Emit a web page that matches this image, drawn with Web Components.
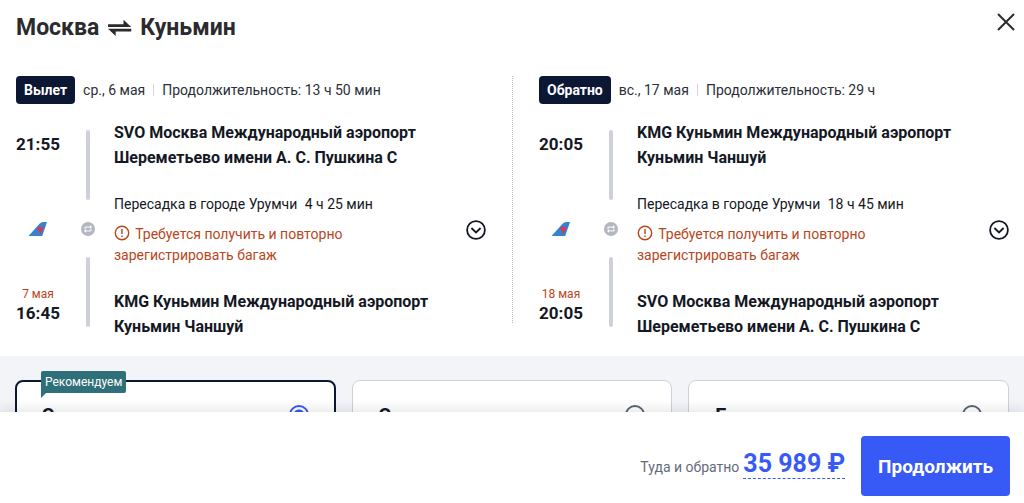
<!DOCTYPE html>
<html lang="ru">
<head>
    <meta charset="UTF-8">
    <meta name="viewport" content="width=device-width, initial-scale=1.0">
    <title>Москва ⇌ Куньмин</title>
    <style>
        body {
            margin: 0;
            font-family: Roboto, "Liberation Sans", sans-serif;
            font-size: 14px;
            line-height: 20px;
            color: #141824;
            background: #fff;
            --accent: #3759f6;
            --warning: #b8461c;
            --navy: #0b1733;
        }
    </style>
</head>
<body>
    <trip-dialog>
        <trip-header slot="header" from="Москва" to="Куньмин"></trip-header>
        <flight-leg slot="legs" label="Вылет" date="ср., 6 мая" duration="13 ч 50 мин"
            depart="21:55" arrive="16:45" arrive-date="7 мая" transfer="4 ч 25 мин">
            <span slot="from">SVO Москва Международный аэропорт Шереметьево имени А. С. Пушкина C</span>
            <span slot="to">KMG Куньмин Международный аэропорт Куньмин Чаншуй</span>
        </flight-leg>
        <flight-leg slot="legs" label="Обратно" date="вс., 17 мая" duration="29 ч"
            depart="20:05" arrive="20:05" arrive-date="18 мая" transfer="18 ч 45 мин">
            <span slot="from">KMG Куньмин Международный аэропорт Куньмин Чаншуй</span>
            <span slot="to">SVO Москва Международный аэропорт Шереметьево имени А. С. Пушкина C</span>
        </flight-leg>
        <fare-card slot="fares" hint="Рекомендуем" selected>Эконом</fare-card>
        <fare-card slot="fares">Эконом</fare-card>
        <fare-card slot="fares">Бизнес</fare-card>
        <price-bar slot="footer" label="Туда и обратно" price="35 989 ₽">Продолжить</price-bar>
    </trip-dialog>

    <script>
        class TripDialog extends HTMLElement {
            connectedCallback() {
                const shadowRoot = this.attachShadow({mode: 'open'});
                shadowRoot.innerHTML = `
                <style>
                    :host {
                        display: flex;
                        flex-direction: column;
                        height: 100vh;
                        overflow: hidden;
                    }

                    main {
                        flex: 1;
                        min-height: 0;
                        overflow: hidden;
                    }

                    .legs {
                        display: grid;
                        grid-template-columns: 1fr 1fr;
                        column-gap: 53px;
                        padding: 0 15px 17px 16px;
                    }

                    .fares {
                        display: grid;
                        grid-template-columns: repeat(3, 1fr);
                        gap: 16px;
                        padding: 24px 15px;
                        background: #f3f4f8;
                    }
                </style>
                <main>
                    <slot name="header"></slot>
                    <section class="legs"><slot name="legs"></slot></section>
                    <section class="fares"><slot name="fares"></slot></section>
                </main>
                <slot name="footer"></slot>`;
            }
        }

        class TripHeader extends HTMLElement {
            connectedCallback() {
                const shadowRoot = this.attachShadow({mode: 'open'});
                shadowRoot.innerHTML = `
                <style>
                    :host {
                        display: flex;
                        justify-content: space-between;
                        align-items: flex-start;
                        padding: 12px 8px 32px 16px;
                        color: #2b2b2e;
                    }

                    h1 {
                        display: flex;
                        align-items: center;
                        gap: 8px;
                        margin: 0;
                        font-size: 23px;
                        line-height: 32px;
                    }

                    button {
                        display: flex;
                        padding: 0;
                        border: 0;
                        background: none;
                        color: inherit;
                        cursor: pointer;
                    }
                </style>
                <h1>
                    <span>${this.getAttribute('from')}</span>
                    <svg width="25" height="18" viewBox="0 0 25 18" fill="currentColor" aria-hidden="true">
                        <path d="M1 5.2h15.5V.8L24.2 7.9H1zM24.2 9.8H1l7.7 7.1v-4.4h15.5z"/>
                    </svg>
                    <span>${this.getAttribute('to')}</span>
                </h1>
                <button type="button" aria-label="Закрыть">
                    <svg width="20" height="20" viewBox="0 0 20 20" fill="none" stroke="currentColor" stroke-width="2">
                        <path d="M2 2l16 16M18 2L2 18"/>
                    </svg>
                </button>`;
            }
        }

        class FlightLeg extends HTMLElement {
            connectedCallback() {
                const get = (name) => this.getAttribute(name);
                const shadowRoot = this.attachShadow({mode: 'open'});
                shadowRoot.innerHTML = `
                <style>
                    :host {
                        display: block;
                        position: relative;
                    }

                    /* dotted rule in the middle of the gap between legs */
                    :host(:first-of-type)::after {
                        content: "";
                        position: absolute;
                        top: 0;
                        bottom: 16px;
                        right: -27px;
                        border-right: 1px dotted #b9bcc4;
                    }

                    .summary {
                        display: flex;
                        align-items: center;
                        gap: 8px;
                        margin-bottom: 16px;
                        color: #2b2e38;
                    }

                    .label {
                        padding: 4px 8px;
                        border-radius: 4px;
                        background: var(--navy);
                        color: #fff;
                        font-weight: bold;
                    }

                    .duration {
                        display: flex;
                        align-items: center;
                        gap: 8px;
                    }

                    .duration::before {
                        content: "";
                        height: 12px;
                        border-left: 1px solid #d5d7dd;
                    }

                    .route {
                        display: flex;
                    }

                    .times, .rail, .stops {
                        display: flex;
                        flex-direction: column;
                    }

                    .times {
                        width: 44px;
                        padding: 14px 0 16px;
                        align-items: center;
                        justify-content: space-between;
                    }

                    .times div {
                        min-height: 38px;
                        text-align: center;
                        white-space: nowrap;
                    }

                    time {
                        display: block;
                        font-size: 17px;
                        font-weight: bold;
                    }

                    small {
                        display: block;
                        font-size: 12px;
                        line-height: 18px;
                        color: var(--warning);
                    }

                    .rail {
                        align-items: center;
                        justify-content: space-between;
                        padding: 10px 19px 12px 21px;
                    }

                    .rail i {
                        width: 4px;
                        height: 70px;
                        border-radius: 2px;
                        background: #cfd1da;
                    }

                    .stops {
                        flex: 1;
                        gap: 23px;
                    }

                    .airport {
                        font-size: 16px;
                        line-height: 25px;
                        font-weight: bold;
                    }

                    p {
                        margin: 0;
                    }

                    .transfer {
                        line-height: 22px;
                    }

                    .transfer span {
                        margin-left: 4px;
                    }

                    .warning {
                        margin-top: 9px;
                        max-width: 240px;
                        line-height: 21px;
                        color: var(--warning);
                    }

                    .warning svg {
                        vertical-align: -2px;
                        margin-right: 2px;
                    }

                    button {
                        align-self: center;
                        display: flex;
                        padding: 0;
                        border: 0;
                        background: none;
                        color: inherit;
                        cursor: pointer;
                    }
                </style>
                <div class="summary">
                    <span class="label">${get('label')}</span>
                    <span>${get('date')}</span>
                    <span class="duration">Продолжительность: ${get('duration')}</span>
                </div>
                <div class="route">
                    <div class="times">
                        <div><time>${get('depart')}</time></div>
                        <svg width="20" height="16" viewBox="0 0 20 16" aria-hidden="true">
                            <path d="M.5 15L11.8 2.6Q13.2 1 15.2 1H19L14.2 15z" fill="#3583cf"/>
                            <path d="M11.8 5.5l1.2 1.2 1.8-1.4 1 2.2-1.5 1-.1 1.8-1.2.5-.3 2.2-1.4-.4.1-2-1-.8.2-1.4-2.2-.4 1.6-2 1.2.5z" fill="#d8394f"/>
                        </svg>
                        <div><small>${get('arrive-date')}</small><time>${get('arrive')}</time></div>
                    </div>
                    <div class="rail">
                        <i></i>
                        <svg width="14" height="14" viewBox="0 0 14 14" aria-hidden="true">
                            <circle cx="7" cy="7" r="7" fill="#b3b7c1"/>
                            <path d="M4 7V5.1H9.6M10 7v1.9H4.4" fill="none" stroke="#fff"/>
                            <path d="M9 3.2L11 5.1 9 7zM5 7L3 8.9l2 1.9z" fill="#fff"/>
                        </svg>
                        <i></i>
                    </div>
                    <div class="stops">
                        <div class="airport"><slot name="from"></slot></div>
                        <div>
                            <p class="transfer">Пересадка в городе Урумчи <span>${get('transfer')}</span></p>
                            <p class="warning"><svg width="16" height="16" viewBox="0 0 16 16" fill="none" stroke="currentColor" stroke-width="1.4" aria-hidden="true"><circle cx="8" cy="8" r="6.7"/><path d="M8 4v5M8 10.4V12"/></svg> Требуется получить и повторно зарегистрировать багаж</p>
                        </div>
                        <div class="airport"><slot name="to"></slot></div>
                    </div>
                    <button type="button" aria-label="Подробнее">
                        <svg width="20" height="20" viewBox="0 0 20 20" fill="none" stroke="currentColor" stroke-width="1.8">
                            <circle cx="10" cy="10" r="8.9"/>
                            <path d="M5.4 8L10 12.4 14.6 8"/>
                        </svg>
                    </button>
                </div>`;
            }
        }

        class FareCard extends HTMLElement {
            connectedCallback() {
                const hint = this.getAttribute('hint');
                const shadowRoot = this.attachShadow({mode: 'open'});
                shadowRoot.innerHTML = `
                <style>
                    :host {
                        display: block;
                        position: relative;
                        box-sizing: border-box;
                        height: 240px;
                        padding: 24px 26px;
                        border: 1px solid #cfd1da;
                        border-radius: 8px;
                        background: #fff;
                    }

                    :host([selected]) {
                        padding: 23px 25px;
                        border: 2px solid var(--navy);
                    }

                    label {
                        display: flex;
                        align-items: flex-start;
                        justify-content: space-between;
                        font-size: 20px;
                        line-height: 22px;
                        font-weight: bold;
                    }

                    input {
                        appearance: none;
                        width: 20px;
                        height: 20px;
                        margin: 0;
                        border: 2px solid #5b6479;
                        border-radius: 50%;
                    }

                    input:checked {
                        border-color: var(--accent);
                        background: radial-gradient(var(--accent) 5px, #fff 6px);
                    }

                    .hint {
                        position: absolute;
                        top: -11px;
                        left: 24px;
                        padding: 1px 4px;
                        border-radius: 2px 2px 2px 0;
                        background: #2f6f7a;
                        color: #fff;
                        font-size: 12px;
                    }

                    .hint::after {
                        content: "";
                        position: absolute;
                        top: 100%;
                        left: 0;
                        border-top: 5px solid #2f6f7a;
                        border-right: 5px solid transparent;
                    }
                </style>
                ${hint ? `<span class="hint">${hint}</span>` : ''}
                <label><slot></slot><input type="radio" ${this.hasAttribute('selected') ? 'checked' : ''}></label>`;
            }
        }

        class PriceBar extends HTMLElement {
            connectedCallback() {
                const shadowRoot = this.attachShadow({mode: 'open'});
                shadowRoot.innerHTML = `
                <style>
                    :host {
                        display: flex;
                        align-items: center;
                        justify-content: flex-end;
                        position: relative;
                        padding: 24px 14px 7px;
                        background: #fff;
                        box-shadow: 0 -2px 12px rgba(20, 24, 36, 0.12);
                    }

                    .total {
                        display: flex;
                        align-items: baseline;
                        gap: 4px;
                        margin: 0 16px 4px 0;
                        color: #646b7d;
                    }

                    button {
                        border: 0;
                        font-family: inherit;
                        font-weight: bold;
                        cursor: pointer;
                    }

                    .price {
                        padding: 0;
                        border-bottom: 1px dashed var(--accent);
                        background: none;
                        color: var(--accent);
                        font-size: 25px;
                        line-height: 28px;
                    }

                    .next {
                        height: 60px;
                        padding: 0 17px;
                        border-radius: 4px;
                        background: var(--accent);
                        color: #fff;
                        font-size: 19px;
                    }
                </style>
                <div class="total">
                    <span>${this.getAttribute('label')}</span>
                    <button type="button" class="price">${this.getAttribute('price')}</button>
                </div>
                <button type="button" class="next"><slot></slot></button>`;
            }
        }

        window.customElements.define('trip-dialog', TripDialog);
        window.customElements.define('trip-header', TripHeader);
        window.customElements.define('flight-leg', FlightLeg);
        window.customElements.define('fare-card', FareCard);
        window.customElements.define('price-bar', PriceBar);
    </script>
</body>
</html>
